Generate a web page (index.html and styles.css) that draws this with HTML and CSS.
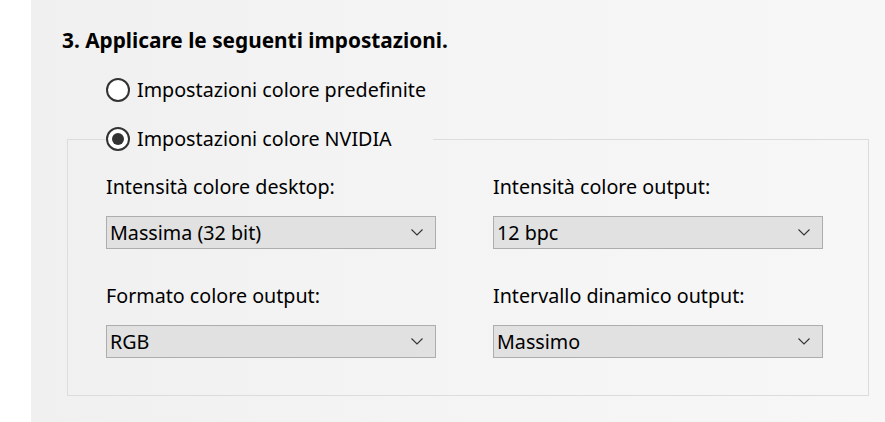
FILE: index.html
```html
<!DOCTYPE html>
<html lang="it">
<head>
<meta charset="utf-8">
<title>Impostazioni colore</title>
<link rel="stylesheet" href="styles.css">
</head>
<body>
<div class="window">
  <div class="strip"></div>
  <main class="panel">
    <h2 class="heading">3. Applicare le seguenti impostazioni.</h2>
    <label class="radio-row option-default">
      <span class="radio"></span>
      <span class="radio-text">Impostazioni colore predefinite</span>
    </label>
    <fieldset class="group">
      <legend class="legend">
        <span class="radio checked"><span class="dot"></span></span>
        <span class="radio-text">Impostazioni colore NVIDIA</span>
      </legend>
      <div class="grid">
        <div class="field">
          <div class="field-label">Intensità colore desktop:</div>
          <div class="select"><span class="select-text">Massima (32 bit)</span><svg class="chev" width="12" height="7" viewBox="0 0 12 7"><path d="M0.5 0.5 L6 6 L11.5 0.5" fill="none" stroke="#333" stroke-width="1.1"/></svg></div>
        </div>
        <div class="field">
          <div class="field-label">Intensità colore output:</div>
          <div class="select"><span class="select-text">12 bpc</span><svg class="chev" width="12" height="7" viewBox="0 0 12 7"><path d="M0.5 0.5 L6 6 L11.5 0.5" fill="none" stroke="#333" stroke-width="1.1"/></svg></div>
        </div>
        <div class="field">
          <div class="field-label">Formato colore output:</div>
          <div class="select"><span class="select-text">RGB</span><svg class="chev" width="12" height="7" viewBox="0 0 12 7"><path d="M0.5 0.5 L6 6 L11.5 0.5" fill="none" stroke="#333" stroke-width="1.1"/></svg></div>
        </div>
        <div class="field">
          <div class="field-label">Intervallo dinamico output:</div>
          <div class="select"><span class="select-text">Massimo</span><svg class="chev" width="12" height="7" viewBox="0 0 12 7"><path d="M0.5 0.5 L6 6 L11.5 0.5" fill="none" stroke="#333" stroke-width="1.1"/></svg></div>
        </div>
      </div>
    </fieldset>
  </main>
</div>
</body>
</html>
```

FILE: styles.css
```css
html, body {
  margin: 0;
  padding: 0;
  background: #ffffff;
}
body {
  font-family: "Noto Sans", "Open Sans", sans-serif;
  color: #000;
}
.window {
  display: flex;
  width: 885px;
  height: 422px;
  overflow: hidden;
}
.strip {
  width: 31px;
  flex: none;
  background: #ffffff;
}
.panel {
  flex: 1;
  background: linear-gradient(to right, #f0f0f0 0%, #f4f4f4 45%, #f7f7f7 100%);
  padding: 27px 0 0 31px;
  box-sizing: border-box;
}
.heading {
  margin: 0;
  font-size: 20.8px;
  font-weight: 700;
  line-height: 26px;
}
.radio-row {
  display: flex;
  align-items: center;
  margin: 24px 0 0 44px;
  height: 26px;
}
.radio {
  width: 20px;
  height: 20px;
  border: 2px solid #333;
  border-radius: 50%;
  background: #fff;
  flex: none;
  display: flex;
  align-items: center;
  justify-content: center;
}
.dot {
  width: 12px;
  height: 12px;
  border-radius: 50%;
  background: #333;
}
.radio-text {
  font-size: 19.7px;
  margin-left: 7px;
  line-height: 26px;
}
.group {
  margin: 23px 0 0 5px;
  width: 802px;
  height: 270px;
  box-sizing: border-box;
  border: 1px solid #dcdcdc;
  padding: 0 0 0 38px;
}
.legend {
  display: flex;
  align-items: center;
  padding: 0 41px 0 0;
  height: 26px;
}
.grid {
  display: grid;
  grid-template-columns: 330px 330px;
  column-gap: 57px;
  row-gap: 34px;
  margin-top: 22px;
}
.field-label {
  font-size: 19.7px;
  line-height: 26px;
  margin-bottom: 16px;
}
.select {
  height: 33px;
  box-sizing: border-box;
  border: 1px solid #adadad;
  background: #e1e1e1;
  display: flex;
  align-items: center;
  justify-content: space-between;
  padding: 0 12px 0 3px;
}
.select-text {
  font-size: 19.7px;
  line-height: 26px;
}
.chev {
  display: block;
}
```
